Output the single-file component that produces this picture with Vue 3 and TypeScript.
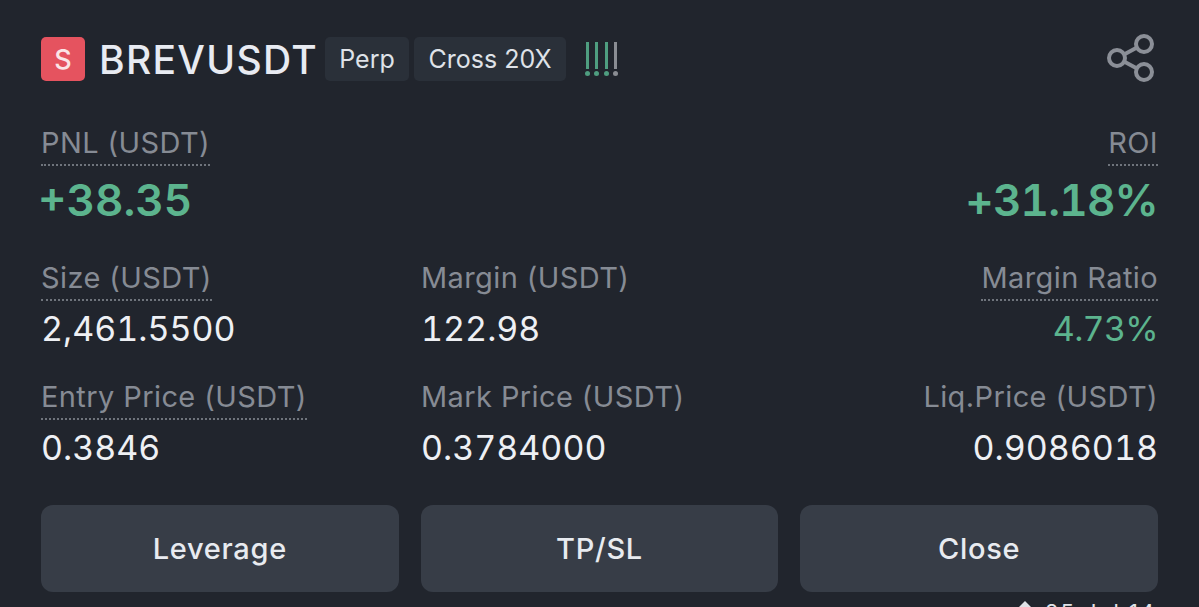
<script setup lang="ts">
interface Cell { label: string; value: string; align: string; dotted: boolean; green?: boolean }
const rows: Cell[][] = [
  [
    { label: 'Size (USDT)', value: '2,461.5500', align: 'left', dotted: true },
    { label: 'Margin (USDT)', value: '122.98', align: 'left', dotted: false },
    { label: 'Margin Ratio', value: '4.73%', align: 'right', dotted: true, green: true },
  ],
  [
    { label: 'Entry Price (USDT)', value: '0.3846', align: 'left', dotted: true },
    { label: 'Mark Price (USDT)', value: '0.3784000', align: 'left', dotted: false },
    { label: 'Liq.Price (USDT)', value: '0.9086018', align: 'right', dotted: false },
  ],
]
const actions = ['Leverage', 'TP/SL', 'Close']
const bars = [true, true, true, false]
</script>

<template>
  <main class="card">
    <header class="head">
      <span class="side">S</span>
      <span class="symbol">BREVUSDT</span>
      <span class="tag perp">Perp</span>
      <span class="tag cross">Cross 20X</span>
      <span class="bars">
        <span v-for="(on, i) in bars" :key="i" class="bar" :class="{ on }"><i></i><b></b></span>
      </span>
      <svg class="share" width="52" height="52" viewBox="0 0 52 52" fill="none" stroke="#8b8f97" stroke-width="4">
        <circle cx="11" cy="25" r="8" />
        <circle cx="38" cy="11" r="8" />
        <circle cx="38" cy="39" r="8" />
        <path d="M18 21.4 31 14.6M18 28.6 31 35.4" />
      </svg>
    </header>

    <section class="pnl">
      <div class="start">
        <span class="label dotted">PNL (USDT)</span>
        <div class="big">+38.35</div>
      </div>
      <div class="end">
        <span class="label dotted">ROI</span>
        <div class="big">+31.18%</div>
      </div>
    </section>

    <section v-for="(row, r) in rows" :key="r" class="grid" :class="'r' + r">
      <div v-for="c in row" :key="c.label" class="cell" :class="c.align">
        <span class="label" :class="{ dotted: c.dotted }">{{ c.label }}</span>
        <div class="value" :class="{ green: c.green }">{{ c.value }}</div>
      </div>
    </section>

    <nav class="actions">
      <button v-for="a in actions" :key="a" type="button">{{ a }}</button>
    </nav>

    <div class="foot"><span class="tri"></span>25 Jul 14</div>
  </main>
</template>

<style>
html, body { margin: 0; background: #21252d; overflow: hidden; }
</style>

<style scoped>
.card {
  box-sizing: border-box;
  width: 1199px;
  height: 607px;
  overflow: hidden;
  padding: 37px 41px 0;
  background: #21252d;
  font-family: "Inter", "Liberation Sans", sans-serif;
  color: #eaecf1;
}
.head { display: flex; align-items: center; height: 44px; }
.side {
  width: 44px; height: 44px; border-radius: 5px; background: #e5535f; color: #fbe4e6;
  display: flex; align-items: center; justify-content: center; font-size: 27px; font-weight: 500;
}
.symbol { width: 218px; margin-left: 14px; font-size: 39px; font-weight: 500; letter-spacing: 1.3px; white-space: nowrap; color: #e8ebf2; }
.tag {
  height: 44px; border-radius: 5px; background: #2a3039; color: #dfe2e8;
  display: flex; align-items: center; justify-content: center; font-size: 25px; white-space: nowrap;
}
.perp { margin-left: 8px; width: 84px; }
.cross { margin-left: 5px; width: 152px; }
.bars { display: flex; gap: 5.5px; margin-left: 19px; }
.bar { display: flex; flex-direction: column; align-items: center; width: 4px; color: #8a8d93; }
.bar.on { color: #4f9e80; }
.bar i { width: 3px; height: 27px; background: currentColor; }
.bar b { width: 5px; height: 5px; margin-top: 2px; border-radius: 50%; background: currentColor; }
.share { margin-left: auto; }

.label {
  display: inline-block; font-size: 29px; line-height: 36px; letter-spacing: 0.4px; color: #868b94;
  padding-bottom: 3px; border-bottom: 2px solid transparent;
}
.dotted { border-bottom: 2px dotted #6f747c; }

.pnl { display: flex; justify-content: space-between; margin-top: 44px; }
.end { text-align: right; }
.big { font-size: 44px; line-height: 50px; font-weight: 600; font-variant-numeric: tabular-nums; color: #5cb48e; margin-top: 9px; }
.start .big { margin-left: -3px; }
.end .big { letter-spacing: -0.8px; }

.grid { display: grid; grid-template-columns: 380px 1fr auto; }
.r0 { margin-top: 35px; }
.r1 { margin-top: 29px; }
.cell.right { text-align: right; }
.value { font-size: 34px; line-height: 42px; margin-top: 7px; font-variant-numeric: tabular-nums; color: #eef0f4; }
.value.green { color: #5cb48e; letter-spacing: -0.7px; }

.actions { display: grid; grid-template-columns: repeat(3, 1fr); gap: 22px; margin-top: 36px; }
.actions button {
  height: 87px; border: 0; border-radius: 12px; background: #373d47; color: #e8ebf0;
  font: 500 29px "Inter", "Liberation Sans", sans-serif; letter-spacing: 0.7px;
}
.foot {
  position: absolute; left: 1017px; top: 599px; display: flex; align-items: flex-start; gap: 12px;
  font-size: 22px; letter-spacing: 2px; color: #e0e3e8; white-space: nowrap;
}
.tri { width: 0; height: 0; margin-top: 2px; border: 8px solid transparent; border-bottom-color: #e0e3e8; border-top: 0; }
</style>
